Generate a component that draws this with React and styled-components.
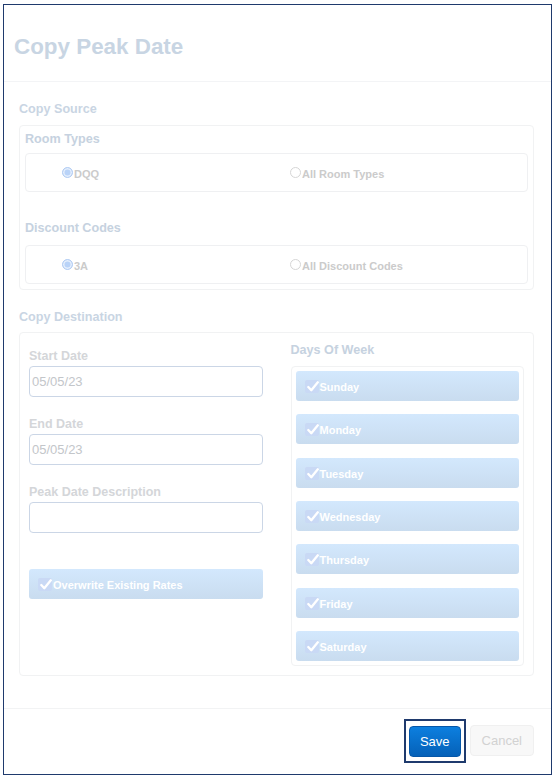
import React from "react";
import styled, { createGlobalStyle } from "styled-components";

const Global = createGlobalStyle`
  html, body { margin: 0; padding: 0; background: #ffffff; }
  body { font-family: "Liberation Sans", Arial, Helvetica, sans-serif; }
  * { box-sizing: border-box; }
`;

const Frame = styled.div`
  margin: 4px 0 0 3px;
  width: 549px;
  border: 1px solid #1f3a6d;
  background: #fff;
`;

const Header = styled.div`
  padding: 29px 10px 21px;
  border-bottom: 1px solid #f3f4f6;
`;

const Title = styled.h1`
  margin: 0;
  font-size: 22.4px;
  line-height: 26px;
  font-weight: 700;
  color: #c8d5e3;
`;

const Body = styled.div`
  padding: 18px 17px 32px 15px;
`;

const SectionTitle = styled.div`
  font-size: 12.6px;
  line-height: 18px;
  font-weight: 700;
  color: #c9d5e3;
  margin-top: ${(p) => p.$top || 0}px;
  margin-bottom: ${(p) => p.$bottom ?? 6}px;
`;

const Group = styled.div`
  border: 1px solid #f1f2f3;
  border-radius: 4px;
  padding: 4px 5px 5px;
`;

const SubLabel = styled.div`
  font-size: 12.6px;
  line-height: 18px;
  font-weight: 700;
  color: #c6d2e0;
  margin-top: ${(p) => p.$top || 0}px;
  margin-bottom: ${(p) => p.$bottom ?? 5}px;
`;

const RadioBox = styled.div`
  height: 39px;
  border: 1px solid #eff0f2;
  border-radius: 4px;
  display: grid;
  grid-template-columns: 228px 1fr;
  align-items: center;
  padding-left: 36px;
`;

const RadioOpt = styled.label`
  display: flex;
  align-items: center;
  font-size: 11px;
  font-weight: 700;
  color: #cbcbcb;
  padding-top: 2px;
`;

const RadioDot = styled.span`
  width: 11px;
  height: 11px;
  border-radius: 50%;
  margin-right: 1px;
  margin-top: -2px;
  border: 1px solid ${(p) => (p.$on ? "#b3cdf3" : "#d6d6d6")};
  background: ${(p) => (p.$on ? "#b9d3f8" : "#fff")};
  box-shadow: ${(p) => (p.$on ? "inset 0 0 0 1.5px #e6effc" : "none")};
`;

const DestBox = styled.div`
  border: 1px solid #f1f2f3;
  border-radius: 4px;
  display: grid;
  grid-template-columns: 1fr 1fr;
  column-gap: 28px;
  padding: 0 9px 9px 9px;
`;

const LeftCol = styled.div`
  padding-top: 14px;
  display: flex;
  flex-direction: column;
`;

const RightCol = styled.div`
  padding-top: 8px;
`;

const Field = styled.div`
  margin-bottom: 18px;
`;

const FieldLabel = styled.div`
  font-size: 12.5px;
  line-height: 18px;
  font-weight: 700;
  color: #d4d6d9;
  margin-bottom: 1px;
`;

const Input = styled.div`
  height: 31px;
  border: 1px solid #cbd6e6;
  border-radius: 4px;
  padding-left: 2px;
  display: flex;
  align-items: center;
  font-size: 13px;
  color: #c3c6ca;
`;

const ToggleBtn = styled.div`
  height: 30px;
  border-radius: 3px;
  background: linear-gradient(#d3e8fd, #c9dcef);
  display: flex;
  align-items: center;
  padding-left: 9px;
  font-size: 11px;
  font-weight: 700;
  color: #ffffff;
  margin-top: ${(p) => p.$top || 0}px;
`;

const CheckWrap = styled.span`
  width: 14px;
  height: 13px;
  border-radius: 2px;
  background: #c9d9f5;
  display: flex;
  align-items: center;
  justify-content: flex-end;
  margin-top: 1px;
`;

const BtnText = styled.span`
  padding-top: 2px;
  margin-left: 1px;
`;

const DaysBox = styled.div`
  border: 1px solid #f1f2f3;
  border-radius: 4px;
  padding: 4px;
  display: flex;
  flex-direction: column;
  gap: 13.33px;
`;

const Footer = styled.div`
  border-top: 1px solid #f2f3f4;
  padding: 10px 17px 11px;
  display: flex;
  justify-content: flex-end;
  align-items: center;
  gap: 4px;
`;

const FocusRing = styled.div`
  border: 2px solid #1f3a6d;
  padding: 5px 3px 4px;
  display: flex;
`;

const SaveBtn = styled.button`
  height: 31px;
  padding: 0 10px;
  border: 1px solid #0657a8;
  border-radius: 4px;
  background: linear-gradient(#0c7fdf, #0561b8);
  color: #fff;
  font-family: inherit;
  font-size: 13px;
`;

const CancelBtn = styled.button`
  height: 31px;
  padding: 0 11px;
  border: 1px solid #f0f0f0;
  border-radius: 4px;
  background: #f8f8f8;
  color: #d2d2d2;
  font-family: inherit;
  font-size: 13px;
`;

const Check = () => (
  <svg width="12" height="11" viewBox="0 0 12 11">
    <path
      d="M1.3 6 L4.3 9.2 L10.8 1.3"
      fill="none"
      stroke="#ffffff"
      strokeWidth="2.3"
      strokeLinecap="round"
      strokeLinejoin="round"
    />
  </svg>
);

const Toggle = ({ children, top }) => (
  <ToggleBtn $top={top}>
    <CheckWrap>
      <Check />
    </CheckWrap>
    <BtnText>{children}</BtnText>
  </ToggleBtn>
);

const days = ["Sunday", "Monday", "Tuesday", "Wednesday", "Thursday", "Friday", "Saturday"];

export default function App() {
  return (
    <>
      <Global />
      <Frame>
        <Header>
          <Title>Copy Peak Date</Title>
        </Header>
        <Body>
          <SectionTitle $bottom={7}>Copy Source</SectionTitle>
          <Group>
            <SubLabel>Room Types</SubLabel>
            <RadioBox>
              <RadioOpt>
                <RadioDot $on />
                DQQ
              </RadioOpt>
              <RadioOpt>
                <RadioDot />
                All Room Types
              </RadioOpt>
            </RadioBox>
            <SubLabel $top={27} $bottom={8}>Discount Codes</SubLabel>
            <RadioBox>
              <RadioOpt>
                <RadioDot $on />
                3A
              </RadioOpt>
              <RadioOpt>
                <RadioDot />
                All Discount Codes
              </RadioOpt>
            </RadioBox>
          </Group>
          <SectionTitle $top={18}>Copy Destination</SectionTitle>
          <DestBox>
            <LeftCol>
              <Field>
                <FieldLabel>Start Date</FieldLabel>
                <Input>05/05/23</Input>
              </Field>
              <Field>
                <FieldLabel>End Date</FieldLabel>
                <Input>05/05/23</Input>
              </Field>
              <Field>
                <FieldLabel>Peak Date Description</FieldLabel>
                <Input />
              </Field>
              <Toggle top={18}>Overwrite Existing Rates</Toggle>
            </LeftCol>
            <RightCol>
              <SubLabel $bottom={7}>Days Of Week</SubLabel>
              <DaysBox>
                {days.map((d) => (
                  <Toggle key={d}>{d}</Toggle>
                ))}
              </DaysBox>
            </RightCol>
          </DestBox>
        </Body>
        <Footer>
          <FocusRing>
            <SaveBtn>Save</SaveBtn>
          </FocusRing>
          <CancelBtn>Cancel</CancelBtn>
        </Footer>
      </Frame>
    </>
  );
}
